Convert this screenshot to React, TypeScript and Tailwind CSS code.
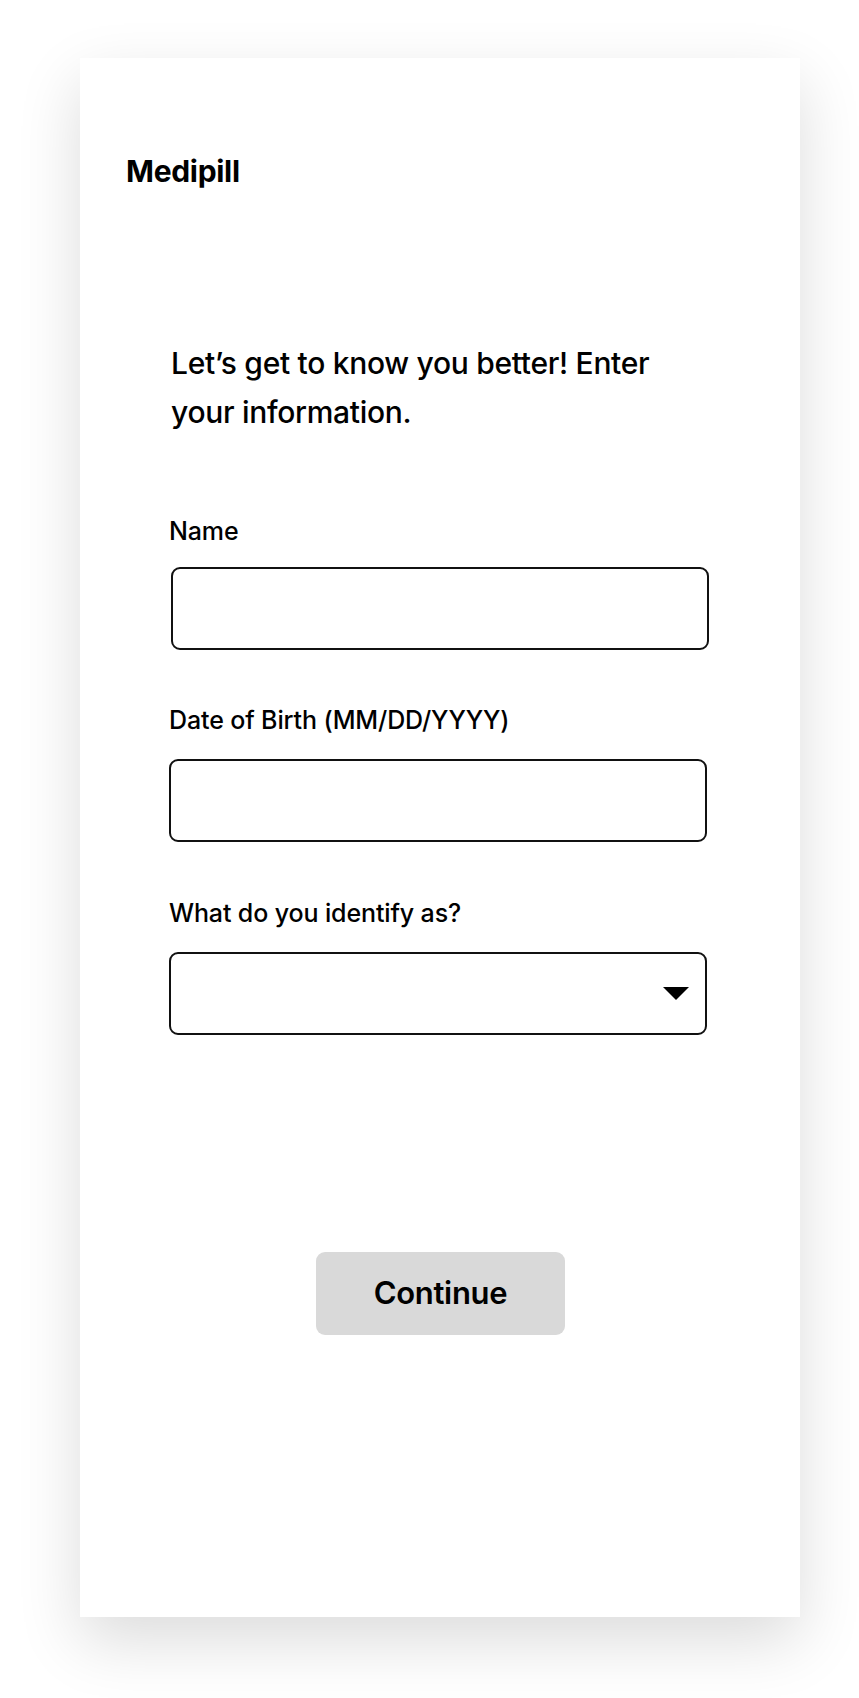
import { ReactNode } from "react";

const font = { fontFamily: "Inter, 'Noto Sans', sans-serif" };

const Field = ({ label, children, className, gap = "mt-[23px]" }: { label: string; children: ReactNode; className?: string; gap?: string }) => (
  <div className={className}>
    <label className="block text-[25px] leading-[32px] font-medium text-black tracking-[-0.005em]">{label}</label>
    <div className={gap}>{children}</div>
  </div>
);

export default function App() {
  return (
    <div className="min-h-[1698px] bg-white pt-[58px] pl-[80px]" style={font}>
      <div className="w-[720px] h-[1559px] bg-white shadow-[0_24px_60px_rgba(0,0,0,0.14)] pl-[46px] pt-[95px]">
        <h1 className="text-[30px] leading-[36px] font-bold text-black tracking-[-0.01em]">Medipill</h1>

        <div className="pl-[43px]">
          <p className="mt-[150px] pl-[2px] text-[30px] leading-[49px] font-medium text-black tracking-[-0.01em] max-w-[500px]">
            Let’s get to know you better! Enter your information.
          </p>

          <Field label="Name" className="mt-[78px]" gap="mt-[20px]">
            <input
              type="text"
              className="ml-[2px] block w-[538px] h-[83px] rounded-[9px] border-2 border-[#111] bg-white px-4 text-[24px] outline-none"
            />
          </Field>

          <Field label="Date of Birth (MM/DD/YYYY)" className="mt-[54px]">
            <input
              type="text"
              className="block w-[538px] h-[83px] rounded-[9px] border-2 border-[#111] bg-white px-4 text-[24px] outline-none"
            />
          </Field>

          <Field label="What do you identify as?" className="mt-[55px]">
            <div className="w-[538px] h-[83px] rounded-[9px] border-2 border-[#111] bg-white flex items-center justify-end pr-[16px]">
              <svg width="26" height="14" viewBox="0 0 26 14" aria-hidden="true">
                <path d="M0 0 H26 L13 13 Z" fill="#000" />
              </svg>
            </div>
          </Field>
        </div>

        <div className="mt-[217px] flex pl-[190px]">
          <button className="w-[249px] h-[83px] rounded-[9px] bg-[#d9d9d9] text-[31px] font-semibold text-black tracking-[-0.01em]">
            Continue
          </button>
        </div>
      </div>
    </div>
  );
}
